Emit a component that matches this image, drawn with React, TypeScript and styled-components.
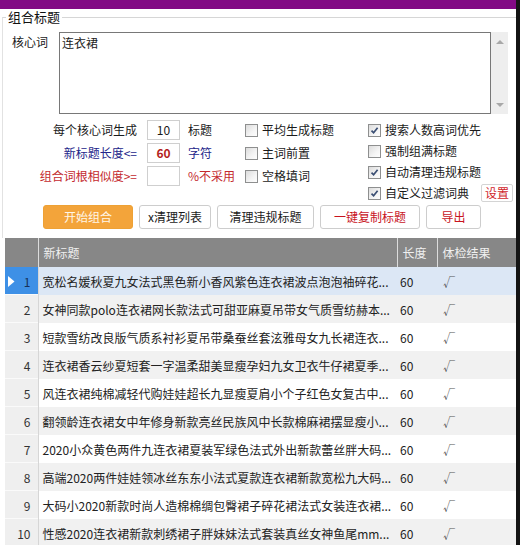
import React from 'react';
import styled, { createGlobalStyle } from 'styled-components';

type Tone = 'primary' | 'plain' | 'danger';
type LabelTone = 'normal' | 'navy' | 'red';

const TITLES = [
  '宽松名媛秋夏九女法式黑色新小香风紫色连衣裙波点泡泡袖碎花...',
  '女神同款polo连衣裙网长款法式可甜亚麻夏吊带女气质雪纺赫本...',
  '短款雪纺改良版气质系衬衫夏吊带桑蚕丝套泫雅母女九长裙连衣...',
  '连衣裙香云纱夏短套一字温柔甜美显瘦孕妇九女卫衣牛仔裙夏季...',
  '风连衣裙纯棉减轻代购娃娃超长九显瘦夏肩小个子红色女复古中...',
  '翻领龄连衣裙女中年修身新款亮丝民族风中长款棉麻裙摆显瘦小...',
  '2020小众黄色两件九连衣裙夏装军绿色法式外出新款蕾丝胖大码...',
  '高端2020两件娃娃领冰丝东东小法式夏款连衣裙新款宽松九大码...',
  '大码小2020新款时尚人造棉棉绸包臀裙子碎花裙法式女装连衣裙...',
  '性感2020连衣裙新款刺绣裙子胖妹妹法式套装真丝女神鱼尾mm...',
];

const GlobalStyle = createGlobalStyle`
  html, body {
    margin: 0;
    padding: 0;
    background: #ffffff;
  }
  body {
    font-family: "Noto Sans CJK SC", "DejaVu Sans", sans-serif;
    font-size: 12px;
    color: #1e1e1e;
  }
`;

const Check = ({ checked }: { checked?: boolean }) => (
  <Box>
    {checked && (
      <svg width="11" height="11" viewBox="0 0 11 11">
        <path d="M2.5 5.6 L4.6 7.8 L8.6 2.8" fill="none" stroke="#3b4f74" strokeWidth="1.7" />
      </svg>
    )}
  </Box>
);

const Option = ({ label, checked }: { label: string; checked?: boolean }) => (
  <OptionItem>
    <Check checked={checked} />
    <span>{label}</span>
  </OptionItem>
);

export default function App() {
  return (
    <Wrapper>
      <GlobalStyle />
      <TitleBar />
      <Group>
        <Legend>组合标题</Legend>
        <KeywordRow>
          <KeywordLabel>核心词</KeywordLabel>
          <TextBox>连衣裙</TextBox>
          <ScrollTrack>
            <svg width="8" height="5" viewBox="0 0 8 5">
              <path d="M0 5 L4 1 L8 5 Z" fill="#a8a8a8" />
            </svg>
            <svg width="8" height="5" viewBox="0 0 8 5">
              <path d="M0 0 L4 4 L8 0 Z" fill="#a8a8a8" />
            </svg>
          </ScrollTrack>
        </KeywordRow>

        <Options>
          <ParamGrid>
            <ParamLabel $tone="normal">每个核心词生成</ParamLabel>
            <NumBox>10</NumBox>
            <Unit $tone="normal">标题</Unit>

            <ParamLabel $tone="navy">新标题长度&lt;=</ParamLabel>
            <NumBox $strong>60</NumBox>
            <Unit $tone="navy">字符</Unit>

            <ParamLabel $tone="red">组合词根相似度&gt;=</ParamLabel>
            <NumBox />
            <Unit $tone="red">%不采用</Unit>
          </ParamGrid>

          <MiddleCol>
            <Option label="平均生成标题" />
            <Option label="主词前置" />
            <Option label="空格填词" />
          </MiddleCol>

          <RightCol>
            <Option label="搜索人数高词优先" checked />
            <Option label="强制组满标题" />
            <Option label="自动清理违规标题" checked />
            <OptionItem>
              <Check checked />
              <span>自定义过滤词典</span>
              <SmallBtn>设置</SmallBtn>
            </OptionItem>
          </RightCol>
        </Options>

        <ButtonRow>
          <Btn $tone="primary" $w={90}>开始组合</Btn>
          <Btn $tone="plain" $w={72}>x清理列表</Btn>
          <Btn $tone="plain" $w={97}>清理违规标题</Btn>
          <Btn $tone="danger" $w={100}>一键复制标题</Btn>
          <Btn $tone="danger" $w={55}>导出</Btn>
        </ButtonRow>
      </Group>

      <Grid>
        <colgroup>
          <col style={{ width: 33 }} />
          <col style={{ width: 359 }} />
          <col style={{ width: 40 }} />
          <col style={{ width: 79 }} />
        </colgroup>
        <thead>
          <tr>
            <Th />
            <Th>新标题</Th>
            <Th>长度</Th>
            <Th>体检结果</Th>
          </tr>
        </thead>
        <tbody>
          {TITLES.map((title, i) => {
            const selected = i === 0;
            return (
              <Row key={i} $selected={selected}>
                <HeadCell $selected={selected}>
                  <HeadInner $selected={selected}>
                    {selected && (
                      <svg width="7" height="11" viewBox="0 0 7 11">
                        <path d="M0 0 L6.5 5.5 L0 11 Z" fill="#ffffff" />
                      </svg>
                    )}
                    <span>{i + 1}</span>
                  </HeadInner>
                </HeadCell>
                <TitleCell>{title}</TitleCell>
                <LenCell>60</LenCell>
                <ResultCell>√</ResultCell>
              </Row>
            );
          })}
        </tbody>
      </Grid>
    </Wrapper>
  );
}

const Wrapper = styled.div`
  width: 516px;
  height: 545px;
  border-right: 4px solid #141414;
  overflow: hidden;
  display: flex;
  flex-direction: column;
`;

const TitleBar = styled.div`
  height: 9px;
  flex-shrink: 0;
  background: #820a84;
`;

const Group = styled.fieldset`
  margin: 1px 0 0 2px;
  padding: 0 0 9px 0;
  min-width: 0;
  border: none;
  border-top: 1px solid #d6d6d6;
  border-left: 1px solid #e2e2e2;
`;

const Legend = styled.legend`
  margin-left: 3px;
  padding: 0 2px;
  font-size: 13px;
  line-height: 14px;
  color: #111111;
`;

const KeywordRow = styled.div`
  display: flex;
  align-items: flex-start;
  margin-top: 8px;
  padding-left: 9px;
`;

const KeywordLabel = styled.div`
  width: 47px;
  padding-top: 2px;
  font-size: 12px;
  line-height: 16px;
  color: #1a1a1a;
`;

const TextBox = styled.div`
  box-sizing: border-box;
  width: 432px;
  height: 82px;
  border: 1px solid #787878;
  padding: 2px 2px;
  font-size: 12px;
  line-height: 16px;
  color: #222222;
  background: #ffffff;
`;

const ScrollTrack = styled.div`
  box-sizing: border-box;
  width: 17px;
  height: 82px;
  background: #eeeeee;
  display: flex;
  flex-direction: column;
  justify-content: space-between;
  align-items: center;
  padding: 7px 0 6px;
`;

const Options = styled.div`
  display: flex;
  align-items: flex-start;
  margin-top: 6px;
`;

const toneColor = (tone: LabelTone) =>
  tone === 'navy' ? '#23258a' : tone === 'red' ? '#c42a2e' : '#1a1a1a';

const ParamGrid = styled.div`
  display: grid;
  grid-template-columns: 144px 33px 65px;
  grid-auto-rows: 20px;
  row-gap: 3px;
  align-items: center;
`;

const ParamLabel = styled.div<{ $tone: LabelTone }>`
  padding-right: 10px;
  text-align: right;
  font-size: 12px;
  line-height: 20px;
  white-space: nowrap;
  color: ${({ $tone }) => toneColor($tone)};
`;

const NumBox = styled.div<{ $strong?: boolean }>`
  box-sizing: border-box;
  height: 20px;
  border: 1px solid #cfcfcf;
  text-align: center;
  font-size: 12px;
  line-height: 18px;
  font-weight: ${({ $strong }) => ($strong ? 700 : 400)};
  color: ${({ $strong }) => ($strong ? '#b41f22' : '#1a1a1a')};
  background: #ffffff;
`;

const Unit = styled.div<{ $tone: LabelTone }>`
  padding-left: 8px;
  font-size: 12px;
  line-height: 20px;
  white-space: nowrap;
  color: ${({ $tone }) => toneColor($tone)};
`;

const MiddleCol = styled.div`
  width: 123px;
  display: flex;
  flex-direction: column;
  gap: 3px;
`;

const RightCol = styled.div`
  display: flex;
  flex-direction: column;
  gap: 1px;
`;

const OptionItem = styled.div`
  display: flex;
  align-items: center;
  gap: 4px;
  height: 20px;
  font-size: 12px;
  line-height: 20px;
  white-space: nowrap;
  color: #1a1a1a;
`;

const Box = styled.span`
  box-sizing: border-box;
  width: 13px;
  height: 13px;
  flex-shrink: 0;
  display: flex;
  align-items: center;
  justify-content: center;
  border: 1px solid #8e8f8f;
  background: linear-gradient(135deg, #dcdcdc 0%, #f4f4f4 60%, #fdfdfd 100%);
`;

const SmallBtn = styled.span`
  box-sizing: border-box;
  margin-left: 8px;
  height: 18px;
  padding: 0 3px;
  border: 1px solid #d4d4d4;
  border-radius: 2px;
  font-size: 12px;
  line-height: 16px;
  color: #d0242a;
  background: #ffffff;
`;

const ButtonRow = styled.div`
  display: flex;
  gap: 6px;
  margin-top: 2px;
  padding-left: 40px;
`;

const Btn = styled.button<{ $tone: Tone; $w: number }>`
  box-sizing: border-box;
  width: ${({ $w }) => $w}px;
  height: 24px;
  padding: 0;
  border-radius: 3px;
  font-family: inherit;
  font-size: 12px;
  line-height: 22px;
  cursor: pointer;
  border: 1px solid ${({ $tone }) => ($tone === 'primary' ? '#eea134' : '#cdcdcd')};
  background: ${({ $tone }) => ($tone === 'primary' ? '#f3a43a' : '#ffffff')};
  color: ${({ $tone }) =>
    $tone === 'primary' ? '#fff6e8' : $tone === 'danger' ? '#c8141e' : '#1a1a1a'};
`;

const Grid = styled.table`
  margin-left: 5px;
  width: 511px;
  table-layout: fixed;
  border-collapse: collapse;
  border-spacing: 0;
  font-size: 12px;
  flex-shrink: 0;
`;

const Th = styled.th`
  height: 29px;
  padding: 0 5px;
  text-align: left;
  font-weight: 400;
  color: #f0f0f0;
  background: #878787;
  border-left: 1px solid #dcdcdc;
  &:first-child {
    border-left: none;
  }
`;

// zebra striping; the current row is tinted blue
const Row = styled.tr<{ $selected: boolean }>`
  height: 28px;
  background: ${({ $selected }) => ($selected ? '#dce7f5' : '#ffffff')};
  &:nth-child(even) {
    background: #f1f1f1;
  }
`;

const HeadCell = styled.td<{ $selected: boolean }>`
  height: 28px;
  padding: 0;
  background: ${({ $selected }) => ($selected ? '#3e90e6' : '#efefef')};
  border-right: 1px solid #d6d6d6;
  box-shadow: inset 0 -1px 0 #fafafa;
`;

const HeadInner = styled.div<{ $selected: boolean }>`
  display: flex;
  align-items: center;
  justify-content: ${({ $selected }) => ($selected ? 'space-between' : 'flex-end')};
  padding: 0 7px 0 3px;
  color: ${({ $selected }) => ($selected ? '#17305a' : '#333333')};
`;

const TitleCell = styled.td`
  padding: 0 0 0 4px;
  white-space: nowrap;
  overflow: hidden;
  color: #222222;
`;

const LenCell = styled.td`
  padding: 0 3px;
  color: #222222;
`;

const ResultCell = styled.td`
  padding: 0 6px;
  color: #555555;
`;
